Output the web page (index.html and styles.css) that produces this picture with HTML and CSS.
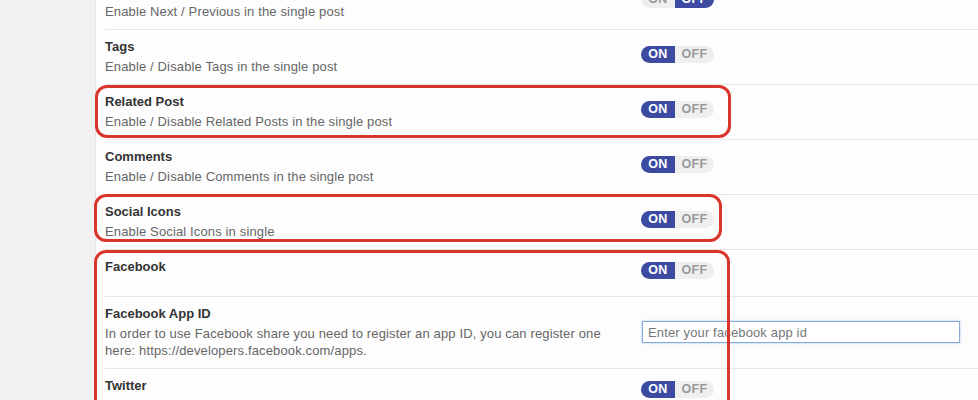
FILE: index.html
```html
<!DOCTYPE html>
<html lang="en">
<head>
    <meta charset="UTF-8">
    <title>Single Post Settings</title>
    <link rel="stylesheet" href="styles.css">
</head>
<body>
    <div class="page">
        <aside class="sidebar"></aside>
        <main class="settings">
            <div class="row">
                <div class="label">
                    <h3>Next / Previous</h3>
                    <p>Enable Next / Previous in the single post</p>
                </div>
                <div class="control">
                    <span class="toggle off"><span class="on">ON</span><span class="off">OFF</span></span>
                </div>
            </div>
            <div class="row">
                <div class="label">
                    <h3>Tags</h3>
                    <p>Enable / Disable Tags in the single post</p>
                </div>
                <div class="control">
                    <span class="toggle"><span class="on">ON</span><span class="off">OFF</span></span>
                </div>
            </div>
            <div class="row">
                <div class="label">
                    <h3>Related Post</h3>
                    <p>Enable / Disable Related Posts in the single post</p>
                </div>
                <div class="control">
                    <span class="toggle"><span class="on">ON</span><span class="off">OFF</span></span>
                </div>
            </div>
            <div class="row">
                <div class="label">
                    <h3>Comments</h3>
                    <p>Enable / Disable Comments in the single post</p>
                </div>
                <div class="control">
                    <span class="toggle"><span class="on">ON</span><span class="off">OFF</span></span>
                </div>
            </div>
            <div class="row">
                <div class="label">
                    <h3>Social Icons</h3>
                    <p>Enable Social Icons in single</p>
                </div>
                <div class="control">
                    <span class="toggle"><span class="on">ON</span><span class="off">OFF</span></span>
                </div>
            </div>
            <div class="row single">
                <div class="label">
                    <h3>Facebook</h3>
                </div>
                <div class="control">
                    <span class="toggle"><span class="on">ON</span><span class="off">OFF</span></span>
                </div>
            </div>
            <div class="row">
                <div class="label">
                    <h3>Facebook App ID</h3>
                    <p>In order to use Facebook share you need to register an app ID, you can register one here: https://developers.facebook.com/apps.</p>
                </div>
                <div class="control">
                    <input type="text" class="app-id" placeholder="Enter your facebook app id">
                </div>
            </div>
            <div class="row single">
                <div class="label">
                    <h3>Twitter</h3>
                </div>
                <div class="control">
                    <span class="toggle"><span class="on">ON</span><span class="off">OFF</span></span>
                </div>
            </div>
        </main>

        <!-- annotation boxes drawn over the screenshot -->
        <div class="mark mark-related"></div>
        <div class="mark mark-social"></div>
        <div class="mark mark-facebook"></div>
    </div>
</body>
</html>
```

FILE: styles.css
```css
body {
    font-family: 'Liberation Sans', Arial, sans-serif;
    margin: 0;
    padding: 0;
    background-color: #fdfdfd;
}

.page {
    position: relative;
    display: flex;
    height: 400px;
    overflow: hidden;
}

.sidebar {
    width: 95px;
    flex-shrink: 0;
    background-color: #f1f1f1;
    border-right: 1px solid #e4e4e4;
}

.settings {
    flex: 1;
    padding-left: 9px;
    margin-top: -25px;
}

.row {
    display: flex;
    align-items: center;
    padding: 8px 0 9px;
    border-bottom: 1px solid #e6e6e6;
}

.row.single {
    min-height: 29px;
    align-items: flex-start;
}

.label {
    width: 536px;
    flex-shrink: 0;
    padding-right: 20px;
    box-sizing: border-box;
    align-self: flex-start;
}

.label h3 {
    margin: 0 0 2px;
    font-size: 13px;
    line-height: 18px;
    font-weight: bold;
    color: #333333;
}

.label p {
    margin: 0;
    font-size: 13px;
    line-height: 17px;
    letter-spacing: 0.14px;
    color: #666666;
}

.control {
    display: flex;
    align-items: center;
}

.row.single .control {
    padding-top: 4px;
}

.toggle {
    display: inline-flex;
    height: 17px;
    margin-bottom: 5px;
    border-radius: 9px;
    overflow: hidden;
    font-size: 12.5px;
    font-weight: bold;
    line-height: 17px;
    letter-spacing: 0.3px;
}

.row.single .toggle {
    margin-bottom: 0;
}

.toggle span {
    display: block;
    text-align: center;
}

.toggle .on {
    width: 34px;
    background-color: #3c4ba1;
    color: #ffffff;
}

.toggle .off {
    width: 39px;
    background-color: #efefef;
    color: #999999;
}

.toggle.off .on {
    background-color: #efefef;
    color: #999999;
}

.toggle.off .off {
    background-color: #3c4ba1;
    color: #ffffff;
}

.app-id {
    width: 318px;
    height: 22px;
    margin-left: 1px;
    padding: 0 5px;
    box-sizing: border-box;
    border: 1px solid #86acd6;
    box-shadow: 0 0 2px rgba(91, 157, 217, 0.6);
    font-family: 'Liberation Sans', Arial, sans-serif;
    font-size: 13px;
    letter-spacing: 0.14px;
    color: #333333;
    background-color: #ffffff;
}

.app-id::placeholder {
    color: #777777;
}

.mark {
    position: absolute;
    border: 3px solid #d9352c;
    border-radius: 12px;
    box-sizing: border-box;
}

.mark-related {
    left: 95px;
    top: 85px;
    width: 636px;
    height: 53px;
}

.mark-social {
    left: 94px;
    top: 194px;
    width: 628px;
    height: 48px;
}

.mark-facebook {
    left: 94px;
    top: 250px;
    width: 636px;
    height: 180px;
}
```
